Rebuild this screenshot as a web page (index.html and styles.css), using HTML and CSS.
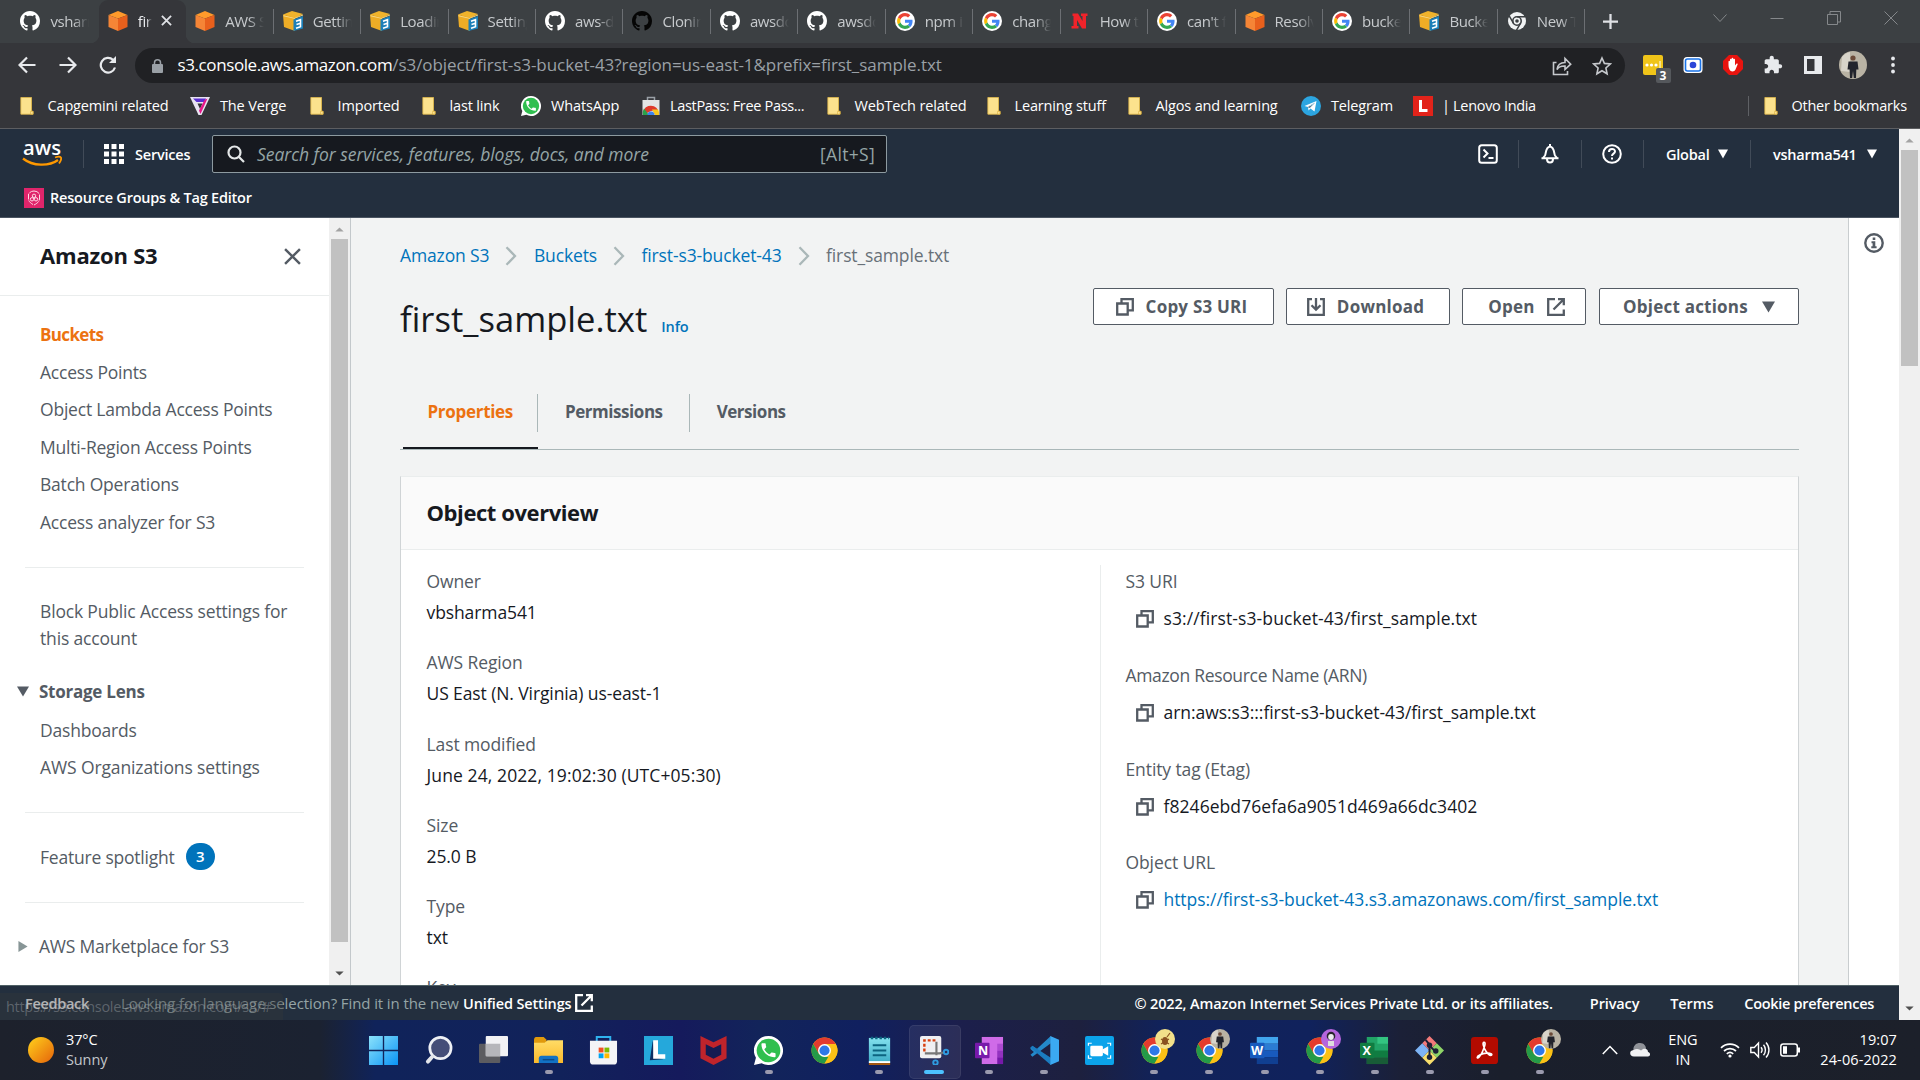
FILE: index.html
```html
<!DOCTYPE html>
<html lang="en">
<head>
<meta charset="utf-8">
<title>first_sample.txt - S3 bucket</title>
<link rel="stylesheet" href="styles.css">
</head>
<body>
<svg class="sprite" aria-hidden="true">
  <defs>
    <linearGradient id="g-win" x1="0" y1="0" x2="1" y2="1"><stop offset="0" stop-color="#8be2fb"/><stop offset="1" stop-color="#0a93f5"/></linearGradient>
    <linearGradient id="g-fold" x1="0" y1="0" x2="0" y2="1"><stop offset="0" stop-color="#ffdc66"/><stop offset="1" stop-color="#fbb92b"/></linearGradient>
    <linearGradient id="g-sun" x1="0" y1="0" x2="1" y2="1"><stop offset="0" stop-color="#ffd21c"/><stop offset="1" stop-color="#e5630a"/></linearGradient>
    <linearGradient id="g-note" x1="0" y1="0" x2="0" y2="1"><stop offset="0" stop-color="#83e1ee"/><stop offset="1" stop-color="#3dacc6"/></linearGradient>
  </defs>
  <symbol id="github" viewBox="0 0 16 16"><path fill="currentColor" d="M8 0C3.58 0 0 3.58 0 8c0 3.54 2.29 6.53 5.47 7.59.4.07.55-.17.55-.38 0-.19-.01-.82-.01-1.49-2.01.37-2.53-.49-2.69-.94-.09-.23-.48-.94-.82-1.13-.28-.15-.68-.52-.01-.53.63-.01 1.08.58 1.23.82.72 1.21 1.87.87 2.33.66.07-.52.28-.87.51-1.07-1.78-.2-3.64-.89-3.64-3.95 0-.87.31-1.59.82-2.15-.08-.2-.36-1.02.08-2.12 0 0 .67-.21 2.2.82.64-.18 1.32-.27 2-.27.68 0 1.36.09 2 .27 1.53-1.04 2.2-.82 2.2-.82.44 1.1.16 1.92.08 2.12.51.56.82 1.27.82 2.15 0 3.07-1.87 3.75-3.65 3.95.29.25.54.73.54 1.48 0 1.07-.01 1.93-.01 2.2 0 .21.15.46.55.38A8.013 8.013 0 0016 8c0-4.42-3.58-8-8-8z"/></symbol>
  <symbol id="cube" viewBox="0 0 20 20"><path fill="#ff9a2b" d="M10 0l9.500 4L10 7.500.5 4z"/><path fill="#f58536" d="M.5 4L10 7.500V20L.5 16z"/><path fill="#e8601c" d="M19.500 4L10 7.500V20l9.500-4z"/></symbol>
  <symbol id="doc" viewBox="0 0 20 20"><path fill="#f0b32c" d="M0 3.500L9 0l11 3-8 4.500z"/><path fill="#eead26" d="M0 3.500l12 3V20L1 16z"/><path fill="#f6d98a" d="M.5 4.300l11 2.700L20 3.600v1l-8.500 3.200-11-2.500z"/><path fill="#1b7fb8" d="M10.500 8.400L20 5v12.500L10.500 20z"/><path fill="none" stroke="#fff" stroke-width="1.600" d="M13 10.200l4.500-1.500v7L13 17.200M13.500 13.500l4-1.200"/></symbol>
  <symbol id="google" viewBox="0 0 48 48"><circle cx="24" cy="24" r="24" fill="#fff"/><g transform="translate(5 5) scale(.79)"><path fill="#EA4335" d="M24 9.500c3.540 0 6.710 1.220 9.210 3.600l6.850-6.850C35.900 2.380 30.470 0 24 0 14.620 0 6.510 5.380 2.560 13.220l7.980 6.190C12.430 13.720 17.740 9.500 24 9.500z"/><path fill="#4285F4" d="M46.980 24.550c0-1.570-.15-3.090-.38-4.550H24v9.020h12.940c-.58 2.960-2.260 5.480-4.780 7.180l7.730 6c4.510-4.180 7.090-10.360 7.090-17.650z"/><path fill="#FBBC05" d="M10.530 28.590c-.48-1.450-.76-2.990-.76-4.590s.27-3.140.76-4.590l-7.980-6.190C.92 16.460 0 20.120 0 24s.92 7.540 2.560 10.780z"/><path fill="#34A853" d="M24 48c6.480 0 11.930-2.130 15.890-5.810l-7.730-6c-2.150 1.450-4.920 2.300-8.160 2.300-6.260 0-11.570-4.220-13.470-9.910l-7.980 6.190C6.510 42.620 14.620 48 24 48z"/></g></symbol>
  <symbol id="netlify" viewBox="0 0 20 20"><path fill="#f0232a" d="M2.500 2.500H8l4.500 7.500V5H11V2.500h6.500V5H16v12.500h-4L7 9v6h1.500v2.500h-7V15H3.500V5h-1z"/></symbol>
  <symbol id="chromew" viewBox="0 0 20 20"><circle cx="10" cy="10" r="9" fill="#f1f3f4"/><circle cx="10" cy="10" r="4.200" fill="#f1f3f4" stroke="#3c4043" stroke-width="1.600"/><circle cx="10" cy="10" r="1.800" fill="#3c4043"/><path stroke="#3c4043" stroke-width="1.500" d="M10 5.800h8.500M6.400 12.100L2.200 4.900M13.600 12.100L9.400 19.300"/></symbol>
  <symbol id="folder" viewBox="0 0 16 22"><path fill="#fce28d" stroke="#e5bd4c" stroke-width="1" d="M.5.500h13v17h2v3.500H.5z"/><path fill="#ffe9a0" stroke="#d9ab33" stroke-width=".8" d="M12.500 21v-3.500h2.800V21z"/></symbol>
  <symbol id="wa" viewBox="0 0 24 24"><path fill="#fff" d="M12 0a12 12 0 1 1-5.600 22.600L0 24l1.600-6A12 12 0 0 1 12 0z"/><circle cx="12" cy="12" r="9.800" fill="#2fbf4f"/><path fill="#fff" transform="translate(4.200 4) scale(.65)" d="M6.620 10.790c1.440 2.830 3.760 5.140 6.590 6.590l2.200-2.200c.27-.27.67-.36 1.020-.24 1.120.37 2.330.57 3.570.57.55 0 1 .45 1 1V20c0 .55-.45 1-1 1-9.390 0-17-7.610-17-17 0-.55.450-1 1-1h3.500c.55 0 1 .45 1 1 0 1.250.2 2.450.57 3.570.11.35.03.74-.25 1.020z"/></symbol>
  <symbol id="chrome" viewBox="0 0 48 48"><circle cx="24" cy="24" r="23" fill="#fbc116"/><path fill="#e33b2e" d="M4.080 12.500A23 23 0 0 1 43.920 12.500H24L14 29.800z"/><path fill="#249a48" d="M4.080 12.500L14 29.800 24 35.500h10L24 47A23 23 0 0 1 4.080 12.500z"/><path fill="#fbc116" d="M43.920 12.500H24L34 29.800 24 47A23 23 0 0 0 43.920 12.500z"/><circle cx="24" cy="24" r="11.500" fill="#fff"/><circle cx="24" cy="24" r="9" fill="#2f78e8"/></symbol>
  <symbol id="caret" viewBox="0 0 10 10" preserveAspectRatio="none"><path fill="currentColor" d="M0 .5h10L5 9.500z"/></symbol>
  <symbol id="copy" viewBox="0 0 18 18"><path fill="none" stroke="currentColor" stroke-width="2.300" d="M1.200 5.500h10.500v11H1.200zM5.500 5V1.200h11.300V12.300H12.500"/></symbol>
  <symbol id="ext" viewBox="0 0 18 18"><path fill="none" stroke="currentColor" stroke-width="2.300" d="M8 1.200H1.200v15.600h15.600V11.500M11 1.200h5.800v6M16.500 1.500L6.500 11.500"/></symbol>
  <symbol id="dl" viewBox="0 0 18 18"><path fill="none" stroke="currentColor" stroke-width="2.300" d="M5 1.200H1.200v15.600h15.600V1.200H13M9 0v11.500M4.500 7.200L9 11.600l4.500-4.400"/></symbol>
  <symbol id="sep" viewBox="0 0 12 20"><path fill="none" stroke="#aab7b8" stroke-width="2.300" d="M1.500 1.200L10 10l-8.500 8.800"/></symbol>
  <symbol id="up" viewBox="0 0 10 6"><path fill="currentColor" d="M0 5.500h10L5 .5z"/></symbol>
  <symbol id="person" viewBox="0 0 28 28"><circle cx="14" cy="14" r="14" fill="#b9b3a4"/><path fill="#d8d4ca" d="M3 6a14 14 0 0 1 8-5v20L2 20z"/><circle cx="14" cy="7" r="2.600" fill="#6b4a38"/><path fill="#22242c" d="M9.500 10.500h9l1 8h-2.200L17 27h-2.200L14 20l-.8 7H11l-.4-8.500H8.500z"/></symbol>
</svg>

<div class="screen">
  <header class="browser">
    <div class="tabstrip">
      <div class="tabs">
        <div class="tab bare"><svg class="fav white"><use href="#github"/></svg><span>vsharma</span></div>
        <div class="tab active"><svg class="fav"><use href="#cube"/></svg><span>first</span><svg class="tab-x" viewBox="0 0 12 12"><path d="M1 1l10 10M11 1L1 11" stroke="#dfe1e5" stroke-width="2"/></svg></div>
        <div class="tab"><svg class="fav"><use href="#cube"/></svg><span>AWS S3</span></div>
        <div class="tab"><svg class="fav"><use href="#doc"/></svg><span>Getting</span></div>
        <div class="tab"><svg class="fav"><use href="#doc"/></svg><span>Loading</span></div>
        <div class="tab"><svg class="fav"><use href="#doc"/></svg><span>Setting</span></div>
        <div class="tab"><svg class="fav white"><use href="#github"/></svg><span>aws-doc</span></div>
        <div class="tab"><svg class="fav black"><use href="#github"/></svg><span>Cloning</span></div>
        <div class="tab"><svg class="fav white"><use href="#github"/></svg><span>awsdocs</span></div>
        <div class="tab"><svg class="fav white"><use href="#github"/></svg><span>awsdocs</span></div>
        <div class="tab"><svg class="fav"><use href="#google"/></svg><span>npm in</span></div>
        <div class="tab"><svg class="fav"><use href="#google"/></svg><span>change</span></div>
        <div class="tab"><svg class="fav"><use href="#netlify"/></svg><span>How to</span></div>
        <div class="tab"><svg class="fav"><use href="#google"/></svg><span>can't fi</span></div>
        <div class="tab"><svg class="fav"><use href="#cube"/></svg><span>Resolve</span></div>
        <div class="tab"><svg class="fav"><use href="#google"/></svg><span>bucket</span></div>
        <div class="tab"><svg class="fav"><use href="#doc"/></svg><span>Bucket</span></div>
        <div class="tab"><svg class="fav"><use href="#chromew"/></svg><span>New Tab</span></div>
      </div>
      <svg class="plus" viewBox="0 0 16 16"><path d="M8 0v16M0 8h16" stroke="#dfe1e5" stroke-width="2.400"/></svg>
      <div class="wincontrols">
        <svg viewBox="0 0 14 14"><path d="M.5 3.500l6.500 7 6.500-7"/></svg>
        <svg viewBox="0 0 14 14"><path d="M.5 7.500h13"/></svg>
        <svg viewBox="0 0 14 14"><path d="M.5 3.500h10v10H.5zM3 3.500v-3h10.500v10.500h-3"/></svg>
        <svg viewBox="0 0 14 14"><path d="M.5.500l13 13M13.500.500l-13 13"/></svg>
      </div>
    </div>

    <div class="toolbar">
      <div class="navbtns">
        <svg viewBox="0 0 18 18"><path d="M17.500 9H2M9 1.500L1.500 9 9 16.500"/></svg>
        <svg viewBox="0 0 18 18"><path d="M.5 9H16M9 1.500L16.500 9 9 16.500"/></svg>
        <svg viewBox="0 0 18 18"><path d="M16 11.500A7.300 7.300 0 1 1 14 3.800l2 2.200"/><path d="M17 0v7h-7z" class="solid"/></svg>
      </div>
      <div class="omnibox">
        <svg class="lock" viewBox="0 0 11 14"><path d="M2.500 6V3.800a3 3 0 0 1 6 0V6" fill="none" stroke="#9aa0a6" stroke-width="1.500"/><rect y="5" width="11" height="9" rx="1" fill="#9aa0a6"/></svg>
        <div class="url"><b>s3.console.aws.amazon.com</b><span>/s3/object/first-s3-bucket-43?region=us-east-1&amp;prefix=first_sample.txt</span></div>
        <svg class="oicon" viewBox="0 0 20 20"><path d="M4.500 6.500H1.500v12h14V15M5 13.500c.6-5 3.500-7 8-7V2.500l5.700 5.700L13 13.500V10c-4-.2-6.500 1-8 3.500z"/></svg>
        <svg class="oicon" viewBox="0 0 20 20"><path d="M10 2l2.400 5.400 5.900.6-4.400 4 1.200 5.800L10 14.800l-5.100 3L6.100 12 1.700 8l5.900-.6z"/></svg>
      </div>
      <div class="exts">
        <div class="ext lp"><svg viewBox="0 0 20 20"><rect width="20" height="20" rx="2" fill="#f0c419"/><circle cx="4" cy="10" r="1.600" fill="#fff"/><circle cx="8.500" cy="10" r="1.600" fill="#fff"/><circle cx="13" cy="10" r="1.600" fill="#fff"/><path d="M17 6v8" stroke="#fff"/></svg><i>3</i></div>
        <svg class="ext" viewBox="0 0 20 20"><rect x=".5" y="2" width="19" height="16" rx="3.500" fill="#fff"/><rect x="2.500" y="4" width="15" height="12" rx="2" fill="none" stroke="#1a73e8" stroke-width="1.600"/><circle cx="10" cy="10" r="3.300" fill="#2b46d8"/></svg>
        <svg class="ext" viewBox="0 0 20 20"><path fill="#e8140f" d="M6 0h8l6 6v8l-6 6H6l-6-6V6z"/><path fill="#fff" d="M5.500 6.500c0-1 1.500-1 1.500 0V4.500c0-1 1.600-1 1.600 0v-1c0-1 1.700-1 1.700 0v1c0-1 1.700-1 1.700 0v6l1.200-1.500c.7-.8 1.800-.2 1.400.6L12.500 14.500C11.500 17 7.500 17 6.500 14.500c-.8-1.500-1-3-1-4.500z"/></svg>
        <svg class="ext" viewBox="0 0 24 24"><path fill="#e8eaed" d="M20.500 11H19V7c0-1.100-.9-2-2-2h-4V3.500C13 2.120 11.880 1 10.500 1S8 2.120 8 3.500V5H4c-1.100 0-1.990.9-1.990 2v3.800H3.500c1.490 0 2.700 1.210 2.700 2.700s-1.210 2.700-2.700 2.700H2V20c0 1.100.9 2 2 2h3.800v-1.500c0-1.490 1.210-2.700 2.700-2.700 1.490 0 2.700 1.210 2.700 2.700V22H17c1.100 0 2-.9 2-2v-4h1.500c1.380 0 2.500-1.120 2.500-2.500S21.880 11 20.500 11z"/></svg>
        <svg class="ext" viewBox="0 0 20 20"><path fill="#e8eaed" d="M1 1h18v18H1zM4 4v12h7.500V4z" fill-rule="evenodd"/></svg>
        <svg class="ext avatar" viewBox="0 0 28 28"><use href="#person"/></svg>
        <svg class="ext" viewBox="0 0 20 20"><circle cx="10" cy="3.500" r="1.900" fill="#e8eaed"/><circle cx="10" cy="10" r="1.900" fill="#e8eaed"/><circle cx="10" cy="16.500" r="1.900" fill="#e8eaed"/></svg>
      </div>
    </div>

    <div class="bookmarks">
      <div class="bm"><svg class="fold"><use href="#folder"/></svg>Capgemini related</div>
      <div class="bm"><svg viewBox="0 0 20 20"><path fill="#e8e4f2" d="M0 1h20l-8.500 18h-3z"/><path fill="#5b2fd0" d="M3 2.500h13L14.500 6h-8z"/><path fill="#35353a" d="M7.500 7.500h5L10 13z"/><path fill="#e8178a" d="M17.500 2.500L10.500 18 9 14.500 14.500 4z"/></svg>The Verge</div>
      <div class="bm"><svg class="fold"><use href="#folder"/></svg>Imported</div>
      <div class="bm"><svg class="fold"><use href="#folder"/></svg>last link</div>
      <div class="bm"><svg><use href="#wa"/></svg>WhatsApp</div>
      <div class="bm tight"><svg viewBox="0 0 20 20"><path fill="#e4e4e4" d="M1.500 4h17v15h-17z"/><path fill="none" stroke="#9aa0a6" stroke-width="1.500" d="M6.500 4V1.500h7V4"/><path fill="#de3a2b" d="M2 19a8 8 0 0 1 15-5l-7 1z"/><path fill="#2aa24b" d="M2 19a9 9 0 0 1 1-6.500L8 19z"/><path fill="#f9c61b" d="M18 19a8 8 0 0 0-1-5.500h-6L14 19z"/><path fill="#3b82ee" d="M6.500 19a3.500 3.500 0 0 1 7 0z"/></svg>LastPass: Free Pass...</div>
      <div class="bm"><svg class="fold"><use href="#folder"/></svg>WebTech related</div>
      <div class="bm"><svg class="fold"><use href="#folder"/></svg>Learning stuff</div>
      <div class="bm"><svg class="fold"><use href="#folder"/></svg>Algos and learning</div>
      <div class="bm"><svg viewBox="0 0 20 20"><circle cx="10" cy="10" r="10" fill="#2ca5e0"/><path fill="#fff" d="M3.500 10l12-5-2 10.500-4-3-2 2-.5-3.500z"/><path stroke="#a9d4ec" d="M7 11l6.500-4-5 5"/></svg>Telegram</div>
      <div class="bm tight"><svg viewBox="0 0 20 20"><rect width="20" height="20" fill="#e2231a"/><path fill="none" stroke="#fff" stroke-width="3" d="M7.500 4v10.500h7"/></svg>| Lenovo India</div>
      <div class="bm other"><svg class="fold"><use href="#folder"/></svg>Other bookmarks</div>
    </div>
  </header>

  <div class="page">
    <div class="console">
      <div class="awsnav">
        <div class="navrow">
          <svg class="awslogo" viewBox="0 0 42 28"><text x="1" y="14.500" class="awstext" textLength="38" lengthAdjust="spacingAndGlyphs">aws</text><path fill="none" stroke="#ff9900" stroke-width="2.300" d="M1 18.500c10 8 26 8 35 1.500"/><path fill="none" stroke="#ff9900" stroke-width="1.800" d="M33 17.500c3-1 5-1.200 6 0 .5 1.500-.5 4-2 6"/></svg>
          <i class="vr"></i>
          <svg class="grid9" viewBox="0 0 20 20"><path fill="#fff" d="M0 0h5v5H0zM7.500 0h5v5h-5zM15 0h5v5h-5zM0 7.500h5v5H0zM7.500 7.500h5v5h-5zM15 7.500h5v5h-5zM0 15h5v5H0zM7.500 15h5v5h-5zM15 15h5v5h-5z"/></svg>
          <span class="navtext services">Services</span>
          <div class="search">
            <svg viewBox="0 0 18 18"><circle cx="7.500" cy="7.500" r="6" /><path d="M12 12l5 5"/></svg>
            <em>Search for services, features, blogs, docs, and more</em>
            <span>[Alt+S]</span>
          </div>
          <div class="navright">
            <svg class="nicon" viewBox="0 0 20 20"><rect x="1.200" y="1.200" width="17.600" height="17.600" rx="2.500"/><path d="M5.500 5.500l4 4-4 4M10.500 14h5"/></svg>
            <i class="vr"></i>
            <svg class="nicon" viewBox="0 0 20 20"><path d="M1.500 14.300h17M3 14l2-2.500c1-1.500.5-8.500 5-9 4.500.5 4 7.500 5 9L17 14M10 0v3M7 15c0 4.800 6 4.800 6 0"/></svg>
            <i class="vr"></i>
            <svg class="nicon" viewBox="0 0 20 20"><circle cx="10" cy="10" r="8.800"/><path d="M7 8c0-4 6-4 6-.5C13 9.700 10 9.500 10 12M10 13.500v2"/></svg>
            <i class="vr"></i>
            <span class="navtext global">Global <svg><use href="#caret"/></svg></span>
            <i class="vr"></i>
            <span class="navtext user">vsharma541 <svg><use href="#caret"/></svg></span>
          </div>
        </div>
        <div class="favrow">
          <svg viewBox="0 0 20 20"><rect width="20" height="20" fill="#e0256b"/><g fill="none" stroke="#ffd9e6" stroke-width="1"><path d="M10 3a6.500 6.500 0 0 1 5.500 3v5c0 2.500-2.500 4.500-5.500 6-3-1.500-5.500-3.500-5.500-6V6A6.500 6.500 0 0 1 10 3z" stroke-dasharray="6 1"/><circle cx="10" cy="7.800" r="1.700"/><circle cx="8" cy="11.300" r="1.700"/><circle cx="12" cy="11.300" r="1.700"/></g></svg>
          <span class="navtext">Resource Groups &amp; Tag Editor</span>
        </div>
      </div>

      <div class="work">
        <aside class="side">
          <div class="sidebody">
            <div class="sidehead"><h2>Amazon S3</h2><svg viewBox="0 0 16 16"><path d="M1 1l14 14M15 1L1 15" stroke="#545b64" stroke-width="2.300"/></svg></div>
            <nav>
              <a class="on">Buckets</a>
              <a>Access Points</a>
              <a>Object Lambda Access Points</a>
              <a>Multi-Region Access Points</a>
              <a>Batch Operations</a>
              <a>Access analyzer for S3</a>
              <hr>
              <a class="wrap">Block Public Access settings for this account</a>
              <a class="group"><svg viewBox="0 0 12 10"><path fill="#545b64" d="M0 0h12L6 10z"/></svg><b>Storage Lens</b></a>
              <a class="after">Dashboards</a>
              <a class="org">AWS Organizations settings</a>
              <hr>
              <a class="feature">Feature spotlight<span class="badge">3</span></a>
              <hr>
              <a class="group market"><svg viewBox="0 0 12 12"><path fill="#879596" d="M1 0v12l10-6z"/></svg>AWS Marketplace for S3</a>
            </nav>
          </div>
          <div class="scroll">
            <svg class="arrow dim"><use href="#up"/></svg>
            <div class="thumb"></div>
            <svg class="arrow down"><use href="#up"/></svg>
          </div>
        </aside>

        <main class="main">
          <div class="crumbs">
            <a>Amazon S3</a><svg><use href="#sep"/></svg><a>Buckets</a><svg><use href="#sep"/></svg><a>first-s3-bucket-43</a><svg><use href="#sep"/></svg><span>first_sample.txt</span>
          </div>
          <div class="titlebar">
            <h1>first_sample.txt<a>Info</a></h1>
            <div class="actions">
              <button class="b-copy"><svg><use href="#copy"/></svg>Copy S3 URI</button>
              <button class="b-dl"><svg><use href="#dl"/></svg>Download</button>
              <button class="b-open">Open<svg><use href="#ext"/></svg></button>
              <button class="b-act">Object actions<svg class="tri"><use href="#caret"/></svg></button>
            </div>
          </div>
          <div class="ptabs">
            <div class="ptab on"><span>Properties</span></div>
            <div class="ptab"><span>Permissions</span></div>
            <div class="ptab"><span>Versions</span></div>
          </div>
          <section class="panel">
            <h3>Object overview</h3>
            <div class="cols">
              <dl class="left">
                <dt>Owner</dt><dd>vbsharma541</dd>
                <dt>AWS Region</dt><dd>US East (N. Virginia) us-east-1</dd>
                <dt>Last modified</dt><dd class="nums">June 24, 2022, 19:02:30 (UTC+05:30)</dd>
                <dt>Size</dt><dd>25.0 B</dd>
                <dt>Type</dt><dd>txt</dd>
                <dt>Key</dt>
              </dl>
              <dl class="right">
                <dt>S3 URI</dt><dd class="uri"><svg><use href="#copy"/></svg>s3://first-s3-bucket-43/first_sample.txt</dd>
                <dt class="arn">Amazon Resource Name (ARN)</dt><dd><svg><use href="#copy"/></svg>arn:aws:s3:::first-s3-bucket-43/first_sample.txt</dd>
                <dt>Entity tag (Etag)</dt><dd class="nums"><svg><use href="#copy"/></svg>f8246ebd76efa6a9051d469a66dc3402</dd>
                <dt>Object URL</dt><dd><svg><use href="#copy"/></svg><a>https://first-s3-bucket-43.s3.amazonaws.com/first_sample.txt</a></dd>
              </dl>
            </div>
          </section>
        </main>

        <div class="tools"><svg viewBox="0 0 20 20"><circle cx="10" cy="10" r="8.700" fill="none" stroke="#545b64" stroke-width="2.400"/><path fill="#545b64" d="M8.700 4.500h2.600V7H8.700zM7.500 8.300h3.800v5h1.300v2H7.300v-2h1.300v-3H7.500z"/></svg></div>
      </div>

      <footer class="foot">
        <span class="fb">Feedback</span>
        <span class="lang">Looking for language selection? Find it in the new</span>
        <span class="us">Unified Settings</span>
        <svg><use href="#ext"/></svg>
        <span class="copyr">© 2022, Amazon Internet Services Private Ltd. or its affiliates.</span>
        <span>Privacy</span><span>Terms</span><span class="cookie">Cookie preferences</span>
        <div class="status">https://s3.console.aws.amazon.com/s3/#</div>
      </footer>
    </div>
    <div class="scroll pagescroll">
      <svg class="arrow dim"><use href="#up"/></svg>
      <div class="thumb"></div>
      <svg class="arrow down"><use href="#up"/></svg>
    </div>
  </div>

  <div class="taskbar">
    <div class="weather"><svg viewBox="0 0 26 26"><circle cx="13" cy="13" r="13" fill="url(#g-sun)"/></svg><div><span>37°C</span><span class="dim2">Sunny</span></div></div>
    <div class="apps">
      <div class="app"><svg viewBox="0 0 30 30"><path fill="url(#g-win)" d="M0 0h14.300v14.300H0zM15.700 0H30v14.300H15.700zM0 15.700h14.300V30H0zM15.700 15.700H30V30H15.700z"/></svg></div>
      <div class="app"><svg viewBox="0 0 30 30"><circle cx="17" cy="12.500" r="11" fill="#454e78" stroke="#eef0f5" stroke-width="2.800"/><path stroke="#e3e5ea" stroke-width="4" stroke-linecap="round" d="M8.500 21.500L4 26.500"/></svg></div>
      <div class="app"><svg viewBox="0 0 30 30"><rect x="0" y="8" width="22" height="20" rx="1" fill="#5c5c60"/><rect x="7" y="0" width="23" height="21" rx="1" fill="#f2f2f4"/><path fill="#b6b6ba" d="M7 8h15v13H7z"/></svg></div>
      <div class="app run"><svg viewBox="0 0 30 30"><path fill="#e0990c" d="M0 4c0-2 1-3 2-3h8l3 3v5H0z"/><path fill="url(#g-fold)" d="M0 7h11l3-2.500h16V28H0z"/><path fill="#1272c4" d="M5 28v-5c0-1.500 1-2.500 2.500-2.500h15c1.500 0 2.500 1 2.500 2.500v5z"/><path stroke="#0a4a88" stroke-width="1.500" d="M9 24.500h12"/></svg></div>
      <div class="app"><svg viewBox="0 0 30 30"><path fill="none" stroke="#2fb2ef" stroke-width="2" d="M8 6V1h14v5"/><path fill="#f4f4f6" d="M1 5h28v21c0 2-1 3.500-3.500 3.500h-21C2 29.500 1 28 1 26z"/><path fill="#f25022" d="M10 12h5v5h-5z"/><path fill="#7fba00" d="M16 12h5v5h-5z"/><path fill="#00a4ef" d="M10 18h5v5h-5z"/><path fill="#ffb900" d="M16 18h5v5h-5z"/></svg></div>
      <div class="app"><svg viewBox="0 0 30 30"><path fill="#25a8db" d="M0 0h30v30H0z"/><path fill="#0e2f63" d="M6 25l3-20 3 17 8 2z"/><path fill="#fff" d="M9.500 4.500h5V19H22v4.500H9.500z"/></svg></div>
      <div class="app"><svg viewBox="0 0 30 30"><path fill="#c0242b" d="M1.500 0L15 6.500 28.500 0v23L15 30 1.500 23z"/><path fill="#141b52" d="M7 8.500l8 4 8-4v11l-8 4-8-4z"/></svg></div>
      <div class="app run"><svg viewBox="0 0 30 30"><use href="#wa"/></svg></div>
      <div class="app"><svg viewBox="0 0 30 30"><use href="#chrome" x="1" y="1" width="28" height="28"/></svg></div>
      <div class="app run"><svg viewBox="0 0 30 30"><path fill="url(#g-note)" d="M4 2h22v26H4z"/><path fill="#fff" d="M4 26h22v2H4z"/><path fill="#a8590f" d="M4 28h22v2.500H4z"/><path stroke="#0d6480" stroke-width="2" d="M8 9.500h14M8 15h14M8 20h14"/><path stroke="#0d6480" stroke-width="2.500" stroke-dasharray="2.500 2" d="M6 2h19"/></svg></div>
      <div class="app run sel"><svg viewBox="0 0 30 30"><rect width="22" height="23" rx="2" fill="#f0f0f2"/><path fill="none" stroke="#d8400f" stroke-width="2.500" stroke-dasharray="3 2" d="M16 4.500H4.500V17"/><path fill="none" stroke="#777" stroke-width="2.200" d="M17 6v14M5 18h15l5-1"/><g fill="none" stroke="#2f9be0" stroke-width="2"><circle cx="27" cy="16.500" r="2.300"/><circle cx="16" cy="27.500" r="2.300"/></g></svg></div>
      <div class="app run"><svg viewBox="0 0 30 30"><path fill="#cf6be8" d="M7 1h22v28H7z"/><path fill="#ad4bd2" d="M23 8h6v7h-6z"/><path fill="#9332bf" d="M23 15h6v7h-6z"/><path fill="#7719aa" d="M23 22h6v7h-6z"/><rect y="7" width="15" height="16" rx="1" fill="#7719aa"/><text x="3" y="20" class="ltr">N</text></svg></div>
      <div class="app run"><svg viewBox="0 0 30 30"><path fill="#2489ca" d="M21.500 0L7 13.500 3 10.500.5 12v1.500L4 16.500l-3.500 3L2.500 21.500 21.500 7.500z"/><path fill="#1b7cc0" d="M21.500 30L.5 12l2-1.800L21.500 22.500z"/><path fill="#3ba9f2" d="M21 0l9 4v22l-9 4z"/></svg></div>
      <div class="app"><svg viewBox="0 0 30 30"><rect x="0" y="0" width="30" height="30" rx="2" fill="#0ba3ea"/><rect x="5.500" y="10" width="13" height="11" rx="1.500" fill="#fff"/><path fill="#fff" d="M18 14l6-3.500v10L18 17z"/><path fill="none" stroke="#fff" stroke-width="1.200" d="M3.500 10V7.500H7M26.500 10V7.500H23M3.500 20v3H7M26.500 20v3H23"/></svg></div>
      <div class="app run"><svg viewBox="0 0 30 30"><use href="#chrome" x="1" y="1" width="28" height="28"/></svg><svg class="pf" viewBox="0 0 20 20"><circle cx="10" cy="10" r="10" fill="#f2e08a"/><ellipse cx="10" cy="12" rx="3" ry="4" fill="#8a5220"/><path stroke="#8a5220" stroke-width="1.200" d="M6 10l8 5M14 10l-8 5M12 8l3-4"/></svg></div>
      <div class="app run"><svg viewBox="0 0 30 30"><use href="#chrome" x="1" y="1" width="28" height="28"/></svg><svg class="pf"><use href="#person"/></svg></div>
      <div class="app run"><svg viewBox="0 0 30 30"><path fill="#41a5ee" d="M7 1h22v7H7z"/><path fill="#2b7cd3" d="M7 8h22v7H7z"/><path fill="#185abd" d="M7 15h22v7H7z"/><path fill="#103f91" d="M7 22h22v7H7z"/><rect y="7" width="15" height="16" rx="1" fill="#185abd"/><text x="1" y="20" class="ltr">W</text></svg></div>
      <div class="app run"><svg viewBox="0 0 30 30"><use href="#chrome" x="1" y="1" width="28" height="28"/></svg><svg class="pf" viewBox="0 0 20 20"><circle cx="10" cy="10" r="10" fill="#b565dd"/><circle cx="10" cy="7" r="4.300" fill="#28242c"/><ellipse cx="10" cy="8" rx="2.800" ry="3" fill="#efeaf0"/><path fill="#ddd" d="M7 12h6v5H7z"/></svg></div>
      <div class="app run"><svg viewBox="0 0 30 30"><path fill="#21a366" d="M7 1h22v28H7z"/><path fill="#33c481" d="M18 1h11v7H18z"/><path fill="#107c41" d="M7 15h22v7H7z"/><path fill="#185c37" d="M7 22h22v7H7z"/><rect y="7" width="15" height="16" rx="1" fill="#107c41"/><text x="2.500" y="20" class="ltr">X</text></svg></div>
      <div class="app run"><svg viewBox="0 0 30 30"><path fill="#f37a7a" d="M15 0l7.500 7.500L15 15 7.500 7.500z"/><path fill="#7db3f5" d="M7.500 7.500L15 15l-7.500 7.500L0 15z"/><path fill="#8fd468" d="M22.500 7.500L30 15l-7.500 7.500L15 15z"/><path fill="#f8de6c" d="M15 15l7.500 7.500L15 30l-7.500-7.500z"/><path fill="none" stroke="#1d2136" stroke-width="2" d="M11 4l4 5v13M15 10l6 6"/><g fill="#1d2136"><circle cx="15" cy="9.500" r="2.800"/><circle cx="15" cy="22" r="2.800"/><circle cx="21.500" cy="15.500" r="2.800"/></g></svg></div>
      <div class="app run"><svg viewBox="0 0 30 30"><rect x="1" y="1" width="28" height="28" rx="3.500" fill="#b30b00"/><path fill="none" stroke="#fff" stroke-width="1.700" d="M14.500 6.500c-2 0-.5 5 1.500 8.500 2 3 4.500 5.500 6 5 1.800-1-1-2.800-5-2.300-4.500.5-9.500 2.300-9.500 4.300 0 2.300 3-.5 5.500-6s3.500-9.500 1.500-9.500z"/></svg></div>
      <div class="app run"><svg viewBox="0 0 30 30"><use href="#chrome" x="1" y="1" width="28" height="28"/></svg><svg class="pf"><use href="#person"/></svg></div>
    </div>
    <div class="tray">
      <svg class="t1" viewBox="0 0 16 10"><path d="M.8 9L8 1.500 15.200 9" fill="none" stroke="#fff" stroke-width="1.500"/></svg>
      <svg class="t2" viewBox="0 0 20 14"><path fill="#8f9298" d="M5 10a6 6 0 0 1 5-10c4 0 6 3 6 6z"/><path fill="#f1f1f3" d="M4 13.500c-5-.5-5-6-.5-6.500 3-2 6-1 7.500.5 3-3 7-1.500 7 1.500 3 .5 2.500 4.500 0 4.500z"/></svg>
      <div class="lang2"><span>ENG</span><span>IN</span></div>
      <svg class="t3" viewBox="0 0 20 16"><path d="M1 5.800a13 13 0 0 1 18 0M4 9a9 9 0 0 1 12 0M6.800 11.800a5 5 0 0 1 6.400 0" fill="none" stroke="#fff" stroke-width="1.700"/><circle cx="10" cy="14" r="1.600" fill="#fff"/></svg>
      <svg class="t3" viewBox="0 0 20 18"><path d="M.8 6.500h3.500L8.500 2v14l-4.200-4.500H.8zM11 6.200a4.500 4.500 0 0 1 0 5.600M13.500 3.800a8 8 0 0 1 0 10.400M16 1.500a11 11 0 0 1 0 15" fill="none" stroke="#fff" stroke-width="1.400"/></svg>
      <svg class="t3" viewBox="0 0 20 16"><rect x=".8" y="2" width="16.500" height="12" rx="2.500" fill="none" stroke="#fff" stroke-width="1.500"/><path fill="#fff" d="M3 4.300h4v7.400H3zM18 5.500h2v5h-2z"/></svg>
      <div class="clock"><span>19:07</span><span>24-06-2022</span></div>
    </div>
  </div>
</div>
</body>
</html>
```
FILE: styles.css
```css
* { box-sizing: border-box; }
body { margin: 0; font-family: "Open Sans", "Noto Sans", sans-serif; }
h1, h2, h3, dl, dt, dd { margin: 0; }
svg { display: block; flex: none; }
.sprite { position: absolute; width: 0; height: 0; }
.screen { width: 1920px; height: 1080px; display: flex; flex-direction: column; overflow: hidden; }

/* Browser window chrome */
.browser { height: 129px; flex: none; background: #35363a; border-bottom: 1px solid #5d5e61; }
.tabstrip { height: 43px; background: #3c4043; display: flex; align-items: center; }
.tabs { display: grid; grid-template-columns: repeat(18, 87.45px); padding-left: 11.4px; }
.tab { height: 43px; display: flex; align-items: center; padding: 0 0 2px 9px; position: relative; font-size: 15px; letter-spacing: -.4px; color: #c7cacd; }
.tab span { width: 39px; margin-left: 10px; overflow: hidden; white-space: nowrap; -webkit-mask-image: linear-gradient(90deg, #000 60%, transparent); mask-image: linear-gradient(90deg, #000 60%, transparent); }
.tab:not(.active):not(.bare)::after { content: ""; position: absolute; right: 0; top: 9px; width: 1px; height: 25px; background: #6c6f73; }
.tab.active { background: #35363a; border-radius: 9px 9px 0 0; color: #e8eaed; }
.tab.active::before, .tab.active::after { content: ""; position: absolute; bottom: 0; width: 9px; height: 9px; }
.tab.active::before { left: -9px; background: radial-gradient(circle at 0 0, #3c4043 9px, #35363a 9.5px); }
.tab.active::after { right: -9px; background: radial-gradient(circle at 100% 0, #3c4043 9px, #35363a 9.5px); }
.tab.active span { width: 14px; }
.fav { width: 20px; height: 20px; }
.white { color: #fff; }
.black { color: #050505; }
.tab-x { width: 11px; height: 11px; margin-left: 9px; }
.plus { width: 15px; height: 15px; margin-left: 18px; }
.wincontrols { display: flex; gap: 43px; margin: -7px 22px 0 auto; }
.wincontrols svg { width: 14px; height: 14px; fill: none; stroke: #85888b; }

.toolbar { height: 45px; display: flex; align-items: center; }
.navbtns { width: 135px; display: flex; gap: 22.500px; padding: 0 0 2px 18px; }
.navbtns svg { width: 18px; height: 18px; fill: none; stroke: #e8eaed; stroke-width: 2.2; }
.navbtns .solid { fill: #e8eaed; stroke: none; }
.omnibox { width: 1490px; height: 35px; border-radius: 18px; background: #202124; display: flex; align-items: center; padding: 0 13px 0 17px; }
.lock { width: 11px; height: 14px; }
.url { flex: 1; margin: -1px 0 0 14.500px; font-size: 17px; line-height: 32px; color: #9aa0a6; white-space: nowrap; }
.url b { font-weight: 400; color: #fff; letter-spacing: -.4px; }
.url span { letter-spacing: -.05px; }
.oicon { width: 20px; height: 20px; margin-left: 20px; fill: none; stroke: #c5c8cc; stroke-width: 1.6; }
.exts { display: grid; grid-template-columns: repeat(7, 40.1px); justify-items: center; margin-left: 7.500px; align-items: center; padding-bottom: 1px; }
.ext { width: 20px; height: 20px; }
.avatar { width: 28px; height: 28px; }
.lp { position: relative; }
.lp i { position: absolute; left: 13px; top: 13px; width: 15px; height: 15px; border-radius: 2px; background: #55585c; color: #fff; font: 700 12px/15px "Open Sans", sans-serif; text-align: center; }

.bookmarks { height: 40px; margin-left: 18px; display: grid; grid-template-columns: 172px 118px 112px 101px 120px 184px 160px 141px 175px 112px 335px 154px; align-items: center; }
.bm { display: flex; align-items: center; font-size: 14.5px; letter-spacing: -.15px; color: #fff; white-space: nowrap; line-height: 30px; margin-top: -5px; }
.bm svg { width: 20px; height: 20px; margin-right: 10px; }
.bm .fold { width: 16px; height: 18px; margin: 0 12.500px 0 1px; }
.bm.tight { letter-spacing: -.32px; }
.bm.tight svg { margin-right: 9px; }
.bm.other { border-left: 1px solid #5f6165; height: 20px; padding-left: 13px; letter-spacing: -.25px; }

/* AWS console */
.page { height: 891px; display: flex; }
.console { width: 1899px; display: flex; flex-direction: column; }
.awsnav { height: 89px; background: #232f3e; border-bottom: 1px solid #4a5461; }
.navrow { display: flex; align-items: center; height: 50px; padding-left: 22px; }
.awslogo { width: 42px; height: 28px; }
.awstext { font: 600 19px "Open Sans", sans-serif; fill: #fff; }
.vr { width: 1px; height: 28px; background: #414b58; flex: none; }
.navrow > .vr { margin: 0 20px 0 19px; }
.grid9 { width: 20px; height: 20px; margin-right: 11px; }
.navtext { font-size: 14.5px; font-weight: 600; letter-spacing: -.22px; color: #fff; white-space: nowrap; }
.services { width: 77px; }
.search { width: 675px; height: 38px; border: 1px solid #8d9aa0; border-radius: 2px; background: #16191f; display: flex; align-items: center; padding: 0 11px 1px 14px; font-size: 17.5px; color: #95a5a6; }
.search svg { width: 18px; height: 18px; fill: none; stroke: #e4e7e8; stroke-width: 2.2; }
.search em { margin-left: 12px; flex: 1; letter-spacing: -.04px; }
.search span { letter-spacing: .32px; }
.navright { flex: 1; display: flex; align-items: center; justify-content: flex-end; padding-right: 22px; }
.nicon { width: 20px; height: 20px; fill: none; stroke: #fff; stroke-width: 2; margin: 0 20.7px; }
.navright .navtext { display: flex; align-items: center; justify-content: space-between; }
.navright .navtext svg { width: 10px; height: 10px; }
.global { width: 62px; margin: 0 22px; }
.user { width: 104px; margin-left: 22px; }
.favrow { display: flex; align-items: center; gap: 6px; padding-left: 24px; height: 37px; }
.favrow svg { width: 20px; height: 20px; margin-top: 1px; }

.work { height: 767px; display: flex; background: #f2f3f3; overflow: hidden; }
.side { width: 351px; display: flex; background: #fff; border-right: 1px solid #c3c8cb; }
.sidebody { width: 329px; }
.sidehead { height: 78px; border-bottom: 1px solid #eaeded; display: flex; justify-content: space-between; align-items: center; padding: 0 28px 0 40px; }
.sidehead h2 { font-size: 22px; font-weight: 700; letter-spacing: -.2px; color: #16191f; margin-top: -3px; }
.sidehead svg { width: 17px; height: 17px; }
.side nav { padding: 20px 25px 0; font-size: 17.5px; letter-spacing: -.21px; color: #545b64; }
.side nav a { display: flex; align-items: center; height: 37.500px; padding-left: 15px; white-space: nowrap; position: relative; top: -.5px; }
.side nav .on { font-size: 17px; font-weight: 700; letter-spacing: -.65px; color: #ec7211; }
.side hr { height: 1px; border: 0; background: #eaeded; margin: 26px 0 25px; }
.side nav .wrap { display: block; height: auto; line-height: 27.2px; white-space: normal; margin: 30px 0 20.500px; padding-right: 0; letter-spacing: -.17px; }
.side nav .group { padding-left: 0; margin-left: -8px; }
.side .group svg { width: 12px; height: 11px; margin-right: 10px; }
.side .group b { font-size: 17px; letter-spacing: -.25px; }
.side nav .after { margin-top: 1px; }
.side nav .org { letter-spacing: -.12px; }
.badge { width: 29px; height: 27px; border-radius: 14px; background: #0073bb; color: #fff; margin-left: 11px; font-size: 15px; font-weight: 600; line-height: 27px; text-align: center; }

.scroll { width: 21px; background: #f0f0f0; display: flex; flex-direction: column; align-items: center; padding-top: 9px; }
.arrow { width: 9px; height: 5px; color: #505050; }
.dim { color: #a3a3a3; }
.down { transform: rotate(180deg); margin-top: auto; margin-bottom: 9px; }
.scroll .thumb { width: 17px; height: 703px; margin-top: 7px; background: #c1c1c1; }
.pagescroll .thumb { height: 216px; }

.main { width: 1497px; padding: 19px 49px 0 49px; }
.crumbs { display: flex; align-items: center; height: 36px; font-size: 17.5px; color: #687078; letter-spacing: -.13px; }
.crumbs a, .panel a, h1 a { color: #0073bb; }
.crumbs svg { width: 12px; height: 20px; margin: 2px 16.500px 0 16px; }
.titlebar { display: flex; justify-content: space-between; margin-top: 15px; }
h1 { font-size: 34.600px; font-weight: 400; line-height: 61px; color: #16191f; }
h1 a { font-size: 14.500px; font-weight: 600; margin-left: 14px; letter-spacing: -.1px; }
.actions { display: flex; }
button { height: 37px; margin: 0 0 0 12px; padding: 0 0 1px; border: 1px solid #545b64; border-radius: 2px; background: #fff; color: #545b64; font: 700 17px "Open Sans", sans-serif; letter-spacing: .22px; display: flex; align-items: center; justify-content: center; }
button svg { width: 18px; height: 18px; margin-top: 1px; }
.b-copy { width: 181px; padding-right: 4px; }
.b-dl { width: 164px; padding-right: 5px; }
.b-open { width: 124px; padding-left: 5px; }
.b-act { width: 200px; margin-left: 13px; }
.b-copy svg, .b-dl svg { margin-right: 12px; }
.b-open svg { margin-left: 12px; }
button .tri { width: 13px; height: 12px; margin-left: 14px; }
.ptabs { margin-top: 37px; height: 56px; display: flex; border-bottom: 1px solid #aab7b8; padding-left: 3px; }
.ptab { height: 55px; font-size: 17px; font-weight: 700; letter-spacing: -.45px; color: #545b64; }
.ptab span { display: block; height: 38px; line-height: 36px; padding: 0 26px 0 27px; border-right: 1px solid #aab7b8; }
.ptab:first-child span { padding: 0 24px 0 24.500px; }
.ptab:last-child span { border: 0; }
.ptab.on { color: #ec7211; letter-spacing: -.3px; border-bottom: 2px solid #16191f; }
.panel { margin-top: 26px; background: #fff; border: 1px solid #d0d4d6; border-top-color: #eaeded; height: 620px; }
.panel h3 { height: 73px; line-height: 70px; padding-left: 25.500px; background: #fafafa; border-bottom: 1px solid #eaeded; font-size: 22px; font-weight: 700; letter-spacing: -.42px; color: #16191f; }
.cols { display: grid; grid-template-columns: 1fr 1fr; padding-top: 19px; font-size: 17.5px; letter-spacing: -.1px; }
.left, .right { margin-top: -4px; }
dt { height: 32px; line-height: 32px; color: #545b64; }
dd { height: 31px; line-height: 31px; color: #16191f; white-space: nowrap; }
.left { padding-left: 25.500px; }
.left dd { margin-bottom: 18.300px; }
.right { border-left: 1px solid #eaeded; padding-left: 25px; height: 500px; }
.right dd { height: 42px; line-height: 42px; margin-bottom: 19.800px; display: flex; align-items: center; letter-spacing: -.05px; }
.right dd svg { width: 18px; height: 18px; margin: 2px 10px 0 10px; color: #545b64; }
.right .uri { letter-spacing: .1px; }
.left .nums { letter-spacing: .1px; }
.right .nums { letter-spacing: .06px; }
.arn { letter-spacing: -.33px; }
.tools { width: 51px; background: #fff; border-left: 1px solid #c9cdcf; padding: 15px 0 0 15px; }
.tools svg { width: 20px; height: 20px; }

.foot { position: relative; height: 35px; background: #232f3e; border-top: 1px solid #4f6065; display: flex; align-items: center; padding: 0 25px; font-size: 14.5px; font-weight: 600; letter-spacing: -.13px; color: #fff; white-space: nowrap; }
.fb { width: 96px; letter-spacing: -.3px; }
.lang { width: 342px; color: #95a5a6; font-weight: 400; font-size: 15px; letter-spacing: -.1px; }
.us { width: 112px; }
.foot svg { width: 18px; height: 18px; }
.copyr { margin-left: auto; }
.copyr ~ span { margin-left: 31px; }
.copyr + span { margin-left: 37px !important; }
.foot .cookie { letter-spacing: -.3px; }
.status { position: absolute; left: 0; top: 7px; width: 283px; height: 27px; padding-left: 6px; line-height: 27px; background: rgba(53, 54, 58, .38); border-radius: 0 4px 0 0; color: rgba(190, 193, 197, .36); font-size: 14.5px; font-weight: 400; letter-spacing: -.3px; }

/* Desktop taskbar */
.taskbar { height: 60px; display: flex; color: #fff; font-size: 14.5px; letter-spacing: -.12px; background: linear-gradient(90deg, #1d212c 0, #1b2231 320px, #10235a 375px, #11225a 560px, #151a5c 680px, #12245a 760px, #10205f 860px, #1c1f4c 960px, #1d203e 1080px, #11225a 1160px, #10225c 1310px, #1b2037 1400px, #1a1f2c 1500px, #1c202a 100%); }
.weather { width: 356px; display: flex; align-items: center; padding-left: 28px; gap: 12px; }
.weather svg { width: 26px; height: 26px; }
.weather span, .lang2 span, .clock span { display: block; line-height: 20.500px; }
.dim2 { color: #c3c6cb; }
.apps { display: grid; grid-template-columns: repeat(22, 55.07px); }
.app { position: relative; display: flex; align-items: center; justify-content: center; }
.app svg { width: 29px; height: 29px; position: relative; }
.app .pf { position: absolute; left: 28.500px; top: 9px; width: 20px; height: 20px; }
.run::after { content: ""; position: absolute; left: 23.500px; top: 50px; width: 8px; height: 4px; border-radius: 2px; background: #9a9aae; }
.sel::before { content: ""; position: absolute; left: 2.500px; top: 5px; width: 50px; height: 52px; border-radius: 5px; background: rgba(255, 255, 255, .07); border: 1px solid rgba(255, 255, 255, .07); }
.sel::after { left: 17.500px; width: 20px; background: #4cc2ff; }
.ltr { font: 700 13px "Open Sans", sans-serif; fill: #fff; }
.tray { flex: 1; display: flex; align-items: center; padding: 0 23px 0 34.500px; }
.t1 { width: 16px; height: 10px; }
.t2 { width: 20px; height: 14px; margin-left: 12px; }
.lang2 { width: 34px; margin-left: 16px; text-align: center; }
.t3 { width: 20px; height: 18px; margin-left: 10px; }
.lang2 + .t3 { margin-left: 20px; }
.clock { margin-left: auto; text-align: right; letter-spacing: .1px; }
```
